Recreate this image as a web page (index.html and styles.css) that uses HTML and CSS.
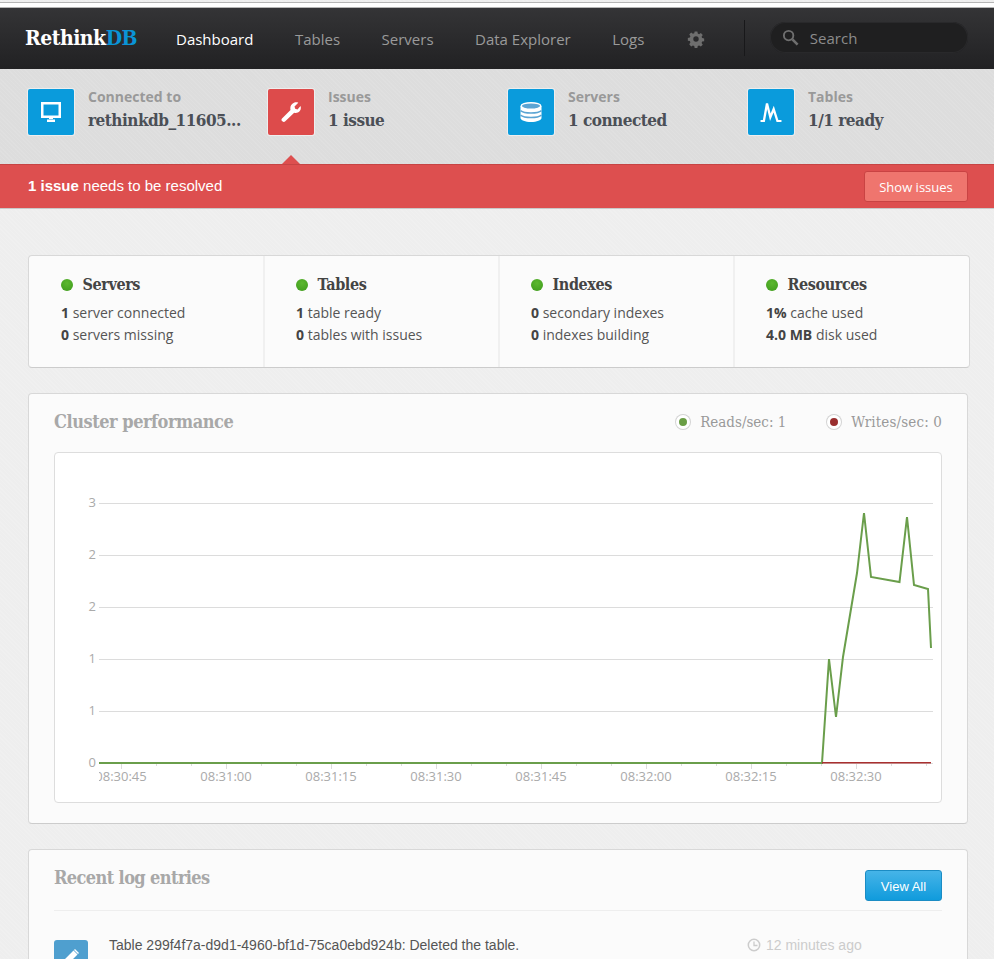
FILE: index.html
```html
<!DOCTYPE html>
<html lang="en">
<head>
    <meta charset="UTF-8">
    <meta name="viewport" content="width=device-width, initial-scale=1.0">
    <title>RethinkDB Dashboard</title>
    <link rel="stylesheet" href="styles.css">
</head>
<body>
    <div class="window-top"></div>

    <header class="topbar">
        <a class="logo" href="#">Rethink<span>DB</span></a>
        <nav class="nav">
            <a class="nav-link active" href="#">Dashboard</a>
            <a class="nav-link" href="#">Tables</a>
            <a class="nav-link" href="#">Servers</a>
            <a class="nav-link" href="#">Data Explorer</a>
            <a class="nav-link" href="#">Logs</a>
        </nav>
        <svg class="gear" viewBox="0 0 24 24"><path fill="#6e6e6e" fill-rule="evenodd" d="M10 1h4l.6 3 2 .9 2.6-1.7 2.8 2.8-1.7 2.6.8 2 3 .6v4l-3 .6-.8 2 1.7 2.6-2.8 2.8-2.6-1.7-2 .8-.6 3h-4l-.6-3-2-.8-2.6 1.7L2 19.7l1.7-2.6-.8-2-3-.6v-4l3-.6.8-2L2 5.3 4.8 2.5l2.6 1.7 2-.8zM12 8a4 4 0 1 0 0 8 4 4 0 0 0 0-8z" transform="translate(1.2 1.2) scale(.9)"/></svg>
        <div class="divider"></div>
        <div class="search">
            <svg class="search-icon" viewBox="0 0 18 18"><circle cx="7" cy="7" r="5" fill="none" stroke="#6f6f6f" stroke-width="2"/><path d="M11 11l5.5 5.5" stroke="#6f6f6f" stroke-width="2.8"/></svg>
            <span>Search</span>
        </div>
    </header>

    <section class="stats">
        <div class="stat">
            <div class="stat-icon">
                <svg viewBox="0 0 20 20"><path fill="#fff" fill-rule="evenodd" d="M0 0h20v16H0zM2.5 2.5v11h15v-11zM6 17.5h8V20H6zM8 16h4v2H8z"/></svg>
            </div>
            <div class="stat-text">
                <div class="stat-label">Connected to</div>
                <div class="stat-value">rethinkdb_11605...</div>
            </div>
        </div>
        <div class="stat">
            <div class="stat-icon red">
                <svg viewBox="0 0 20 20"><path fill="#fff" d="M1 16.5L9.5 8C8.8 5 10 2 13 .8c1.5-.6 3-.6 4.3 0L13.5 4.5l.7 2.3 2.3.6 3-3.3c.7 1.8.4 3.8-.9 5.2-1.5 1.6-3.4 2-5.4 1.5L4 19.5c-.6.6-1.5.7-2.3.1L.8 18.8c-.6-.7-.4-1.6.2-2.3z"/></svg>
            </div>
            <div class="stat-text">
                <div class="stat-label">Issues</div>
                <div class="stat-value">1 issue</div>
            </div>
        </div>
        <div class="stat">
            <div class="stat-icon">
                <svg class="icon-db" viewBox="0 0 22 20"><path d="M.5 4v12c0 2.2 4.7 4 10.5 4s10.500-1.800 10.500-4V4" fill="#fff"/><ellipse cx="11" cy="4" rx="9.8" ry="3.3" fill="#5ba4d3" stroke="#fff" stroke-width="1.4"/><path d="M.5 8.6c2 1.6 5.700 2.400 10.500 2.400s8.500-.8 10.500-2.400M.5 13.100c2 1.600 5.700 2.400 10.500 2.400s8.500-.8 10.500-2.400" fill="none" stroke="#5ba4d3" stroke-width="1.5"/></svg>
            </div>
            <div class="stat-text">
                <div class="stat-label">Servers</div>
                <div class="stat-value">1 connected</div>
            </div>
        </div>
        <div class="stat">
            <div class="stat-icon">
                <svg class="icon-peak" viewBox="0 0 22 21"><path d="M0 20h3.5L6.8 1.5 10.3 16 13.8 7.5 17.8 20H22" fill="none" stroke="#fff" stroke-width="2.4"/></svg>
            </div>
            <div class="stat-text">
                <div class="stat-label">Tables</div>
                <div class="stat-value">1/1 ready</div>
            </div>
        </div>
    </section>

    <section class="alert">
        <span class="alert-arrow"></span>
        <p><strong>1 issue</strong> needs to be resolved</p>
        <a class="btn-issues" href="#">Show issues</a>
    </section>

    <main class="content">
        <section class="card summary">
            <div class="summary-col">
                <h3><span class="dot"></span>Servers</h3>
                <p><strong>1</strong> server connected</p>
                <p><strong>0</strong> servers missing</p>
            </div>
            <div class="summary-col">
                <h3><span class="dot"></span>Tables</h3>
                <p><strong>1</strong> table ready</p>
                <p><strong>0</strong> tables with issues</p>
            </div>
            <div class="summary-col">
                <h3><span class="dot"></span>Indexes</h3>
                <p><strong>0</strong> secondary indexes</p>
                <p><strong>0</strong> indexes building</p>
            </div>
            <div class="summary-col">
                <h3><span class="dot"></span>Resources</h3>
                <p><strong>1%</strong> cache used</p>
                <p><strong>4.0 MB</strong> disk used</p>
            </div>
        </section>

        <section class="card perf">
            <div class="perf-head">
                <h2>Cluster performance</h2>
                <div class="legend">
                    <span class="legend-item"><span class="legend-dot green"></span>Reads/sec: 1</span>
                    <span class="legend-item"><span class="legend-dot dark-red"></span>Writes/sec: 0</span>
                </div>
            </div>
            <div class="chart">
                <svg viewBox="55 453 886 349" width="886" height="349">
                    <defs>
                        <clipPath id="plot"><rect x="99" y="453" width="834" height="349"/></clipPath>
                    </defs>
                    <g class="grid">
                        <path d="M99 503.5H933M99 555.5H933M99 607.5H933M99 659.5H933M99 711.5H933M99 763.5H933"/>
                    </g>
                    <g class="ticks">
                        <path d="M121.5 764v5M226.5 764v5M331.5 764v5M436.5 764v5M541.5 764v5M646.5 764v5M751.5 764v5M856.5 764v5"/>
                        <path d="M156.5 764v2M191.5 764v2M261.5 764v2M296.5 764v2M366.5 764v2M401.5 764v2M471.5 764v2M506.5 764v2M576.5 764v2M611.5 764v2M681.5 764v2M716.5 764v2M786.5 764v2M821.5 764v2M891.5 764v2M926.5 764v2"/>
                    </g>
                    <g class="y-labels">
                        <text x="96" y="507">3</text>
                        <text x="96" y="559">2</text>
                        <text x="96" y="611">2</text>
                        <text x="96" y="663">1</text>
                        <text x="96" y="715">1</text>
                        <text x="96" y="767">0</text>
                    </g>
                    <g class="x-labels" clip-path="url(#plot)">
                        <text x="121" y="781">08:30:45</text>
                        <text x="226" y="781">08:31:00</text>
                        <text x="331" y="781">08:31:15</text>
                        <text x="436" y="781">08:31:30</text>
                        <text x="541" y="781">08:31:45</text>
                        <text x="646" y="781">08:32:00</text>
                        <text x="751" y="781">08:32:15</text>
                        <text x="856" y="781">08:32:30</text>
                    </g>
                    <polyline class="line-reads" points="99,763 822,763 829,659 836,717 843,657 857,573 864,513 871,577 899.5,582 907,517 914,585 928,589 931,648"/>
                    <polyline class="line-writes" points="822,762.8 931,762.8"/>
                </svg>
            </div>
        </section>

        <section class="card log">
            <div class="log-head">
                <h2>Recent log entries</h2>
                <a class="btn-view" href="#">View All</a>
            </div>
            <div class="log-row">
                <div class="log-icon">
                    <svg viewBox="0 0 16 16"><path fill="#fff" d="M0 16l1-5L10.5 1.5l4 4L5 15zM12 0l4 4-1 1-4-4z"/></svg>
                </div>
                <div class="log-msg">Table 299f4f7a-d9d1-4960-bf1d-75ca0ebd924b: Deleted the table.</div>
                <div class="log-time">
                    <svg viewBox="0 0 14 14"><circle cx="7" cy="7" r="5.7" fill="none" stroke="#ccc" stroke-width="1.5"/><path d="M7 3.5V7.5H10.5" fill="none" stroke="#ccc" stroke-width="1.3"/></svg>
                    12 minutes ago
                </div>
            </div>
        </section>
    </main>
</body>
</html>
```
FILE: styles.css
```css
html, body {
    margin: 0;
    height: 959px;
    overflow: hidden;
}

body {
    font-family: "Open Sans", sans-serif;
    font-size: 14px;
    color: #444;
    background-color: #eee;
    background-image: repeating-linear-gradient(45deg, rgba(255, 255, 255, 0.12) 0, rgba(255, 255, 255, 0.12) 1px, transparent 1px, transparent 3px);
}

a {
    text-decoration: none;
}

/* Ust serit */
.window-top {
    height: 4px;
    margin-top: 2px;
    background: #fff;
    border-top: 1px solid #b5b5b5;
    border-bottom: 1px solid #b5b5b5;
}

.topbar {
    display: flex;
    align-items: center;
    height: 61px;
    background: linear-gradient(#343436, #212123);
    color: #aaa;
}

.logo {
    width: 151px;
    padding-left: 25px;
    margin-top: -3px;
    font-family: "DejaVu Serif", serif;
    font-stretch: condensed;
    font-weight: bold;
    font-size: 21px;
    letter-spacing: -0.5px;
    color: #fff;
}

.logo span {
    color: #0a94d6;
}

.nav {
    display: flex;
}

.nav-link {
    font-size: 15px;
    color: #9a9a9a;
    margin-right: 41.5px;
}

.nav-link.active {
    color: #fff;
}

.gear {
    width: 18px;
    height: 18px;
    margin-left: 1px;
}

.divider {
    width: 1px;
    height: 36px;
    margin-left: 39px;
    margin-top: -1px;
    background: #18181a;
}

.search {
    display: flex;
    align-items: center;
    width: 198px;
    height: 31px;
    margin-left: 25px;
    margin-top: -2px;
    border-radius: 16px;
    background: #1f1f20;
    box-shadow: inset 0 0 0 1px #29292b;
    font-size: 15px;
    color: #8c8c8c;
}

.search-icon {
    width: 17px;
    height: 17px;
    margin-left: 12px;
    margin-right: 11px;
}

/* Istatistik alani */
.stats {
    display: flex;
    height: 95px;
    padding-left: 28px;
    background-color: #dddddd;
    background-image: repeating-linear-gradient(45deg, rgba(255, 255, 255, 0.08) 0, rgba(255, 255, 255, 0.08) 1px, transparent 1px, transparent 3px);
    box-sizing: border-box;
}

.stat {
    display: flex;
    width: 240px;
    padding-top: 20px;
    box-sizing: border-box;
}

.stat-icon {
    display: flex;
    align-items: center;
    justify-content: center;
    width: 46px;
    height: 46px;
    flex-shrink: 0;
    border-radius: 2px;
    background: #0a9bdc;
    box-shadow: 0 0 0 1px #eee;
}

.stat-icon.red {
    background: #dd4b4b;
}

.stat-icon svg {
    width: 20px;
    height: 20px;
}

.stat-icon .icon-db,
.stat-icon .icon-peak {
    width: 22px;
}

.stat-text {
    margin-left: 14px;
    width: 158px;
}

.stat-label {
    font-size: 14px;
    font-weight: bold;
    line-height: 18px;
    margin-top: -1px;
    color: #999;
}

.stat-value {
    margin-top: 3px;
    font-family: "DejaVu Serif", serif;
    font-stretch: condensed;
    font-size: 17px;
    font-weight: bold;
    letter-spacing: -0.5px;
    line-height: 23px;
    color: #4b4f56;
    white-space: nowrap;
}

/* Uyari */
.alert {
    position: relative;
    display: flex;
    align-items: center;
    justify-content: space-between;
    height: 45px;
    padding: 0 26px 0 28px;
    box-sizing: border-box;
    background: #dd4f4f;
    border-top: 1px solid #c64444;
    border-bottom: 1px solid #c9c9c9;
    color: #fff;
}

.alert p {
    margin: -2px 0 0;
    font-family: "Liberation Sans", sans-serif;
    font-size: 15px;
}

.alert-arrow {
    position: absolute;
    left: 282px;
    top: -10px;
    width: 0;
    height: 0;
    border-left: 9px solid transparent;
    border-right: 9px solid transparent;
    border-bottom: 9px solid #dd4f4f;
}

.btn-issues {
    display: block;
    width: 104px;
    height: 31px;
    box-sizing: border-box;
    border: 1px solid #c94343;
    border-radius: 3px;
    background: #ef756e;
    color: #fff;
    font-size: 13px;
    line-height: 30px;
    text-align: center;
}

/* Kartlar */
.content {
    padding: 46px 0 0 28px;
}

.card {
    box-sizing: border-box;
    background: #fbfbfb;
    border: 1px solid #d8d8d8;
    border-bottom-color: #ccc;
    border-radius: 4px;
}

.summary {
    display: flex;
    width: 942px;
    height: 113px;
    margin-bottom: 25px;
    padding-left: 1px;
}

.summary-col {
    flex: 0 0 235px;
    padding: 17px 0 0 31px;
    box-sizing: border-box;
    border-right: 2px solid #f0f0f0;
}

.summary-col:last-child {
    flex-basis: 234px;
    border-right: none;
}

.summary-col h3 {
    display: flex;
    align-items: center;
    margin: 0 0 5px;
    font-family: "DejaVu Serif", serif;
    font-stretch: condensed;
    font-size: 16px;
    font-weight: bold;
    letter-spacing: -0.4px;
    line-height: 24px;
    color: #444;
}

.dot {
    width: 12px;
    height: 12px;
    margin-right: 9.5px;
    border-radius: 50%;
    background: radial-gradient(circle at 50% 35%, #5cb82f, #3d9a1b);
}

.summary-col p {
    margin: 0;
    font-size: 14px;
    line-height: 22px;
    color: #555;
}

.summary-col strong {
    color: #444;
}

.perf {
    width: 940px;
    height: 431px;
    margin-bottom: 25px;
    padding: 0 25px;
}

.perf-head {
    display: flex;
    align-items: center;
    justify-content: space-between;
    height: 58px;
    padding-bottom: 3px;
    box-sizing: border-box;
}

h2 {
    margin: 0;
    font-family: "DejaVu Serif", serif;
    font-stretch: condensed;
    font-size: 18px;
    font-weight: bold;
    line-height: 20px;
    color: #a8a8a8;
    letter-spacing: -0.45px;
}

.legend {
    display: flex;
    gap: 40px;
    font-family: "DejaVu Serif", serif;
    font-stretch: condensed;
    font-size: 15px;
    color: #999;
}

.legend-item {
    display: flex;
    align-items: center;
}

.legend-item:last-child {
    letter-spacing: 0.15px;
}

.legend-dot {
    width: 8px;
    height: 8px;
    margin-right: 10px;
    border-radius: 50%;
    border: 3px solid #fff;
    box-shadow: 0 0 0 1px #d4d4d4;
    margin-left: 1px;
}

.legend-dot.green {
    background: #6a9e45;
}

.legend-dot.dark-red {
    background: #9a2f2f;
}

.chart {
    width: 888px;
    height: 351px;
    box-sizing: border-box;
    background: #fff;
    border: 1px solid #ddd;
    border-radius: 4px;
}

.chart svg {
    display: block;
}

.grid path {
    fill: none;
    stroke: #dcdcdc;
    stroke-width: 1;
}

.ticks path {
    fill: none;
    stroke: #ddd;
    stroke-width: 1;
}

.y-labels text {
    font-size: 13px;
    fill: #aaa;
    text-anchor: end;
}

.x-labels text {
    font-size: 13px;
    fill: #aaa;
    text-anchor: middle;
}

.line-reads {
    fill: none;
    stroke: #6a9e4b;
    stroke-width: 2;
}

.line-writes {
    fill: none;
    stroke: #a93030;
    stroke-width: 1.5;
}

.log {
    width: 940px;
    height: 200px;
    padding: 0 25px;
}

.log-head {
    display: flex;
    align-items: flex-start;
    justify-content: space-between;
    height: 40px;
    padding-top: 20px;
    border-bottom: 1px solid #eee;
}

.log-head h2 {
    margin-top: -2px;
    letter-spacing: -0.6px;
}

.btn-view {
    display: block;
    width: 77px;
    height: 31px;
    box-sizing: border-box;
    border: 1px solid #1b8cc4;
    border-radius: 3px;
    background: linear-gradient(#46b4e8, #109bdc);
    color: #fff;
    font-family: "Liberation Sans", sans-serif;
    font-size: 13px;
    line-height: 31px;
    text-align: center;
}

.log-row {
    display: flex;
    padding-top: 29px;
    font-family: "Liberation Sans", sans-serif;
    font-size: 14px;
}

.log-icon {
    display: flex;
    align-items: center;
    justify-content: center;
    width: 34px;
    height: 34px;
    border-radius: 3px;
    background: #4f9fcf;
}

.log-icon svg {
    width: 16px;
    height: 16px;
}

.log-msg {
    width: 638px;
    margin-left: 21px;
    margin-top: -3px;
    line-height: 16px;
    color: #555;
}

.log-time {
    display: flex;
    align-items: flex-start;
    margin-top: -3px;
    line-height: 16px;
    color: #ccc;
}

.log-time svg {
    width: 14px;
    height: 14px;
    margin: 1px 5px 0 0;
}
```
